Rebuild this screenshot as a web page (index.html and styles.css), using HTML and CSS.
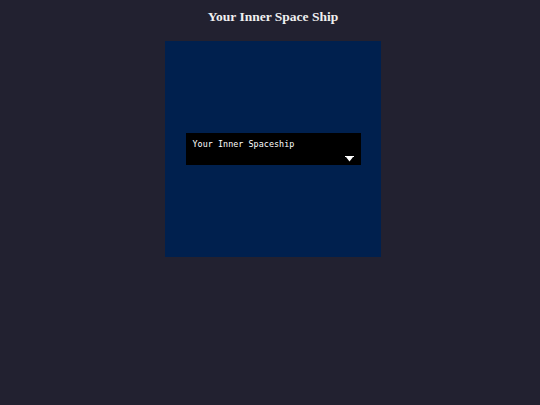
FILE: index.html
```html
<!DOCTYPE html>
<html>
<head>
<meta charset="utf-8">
<link rel="stylesheet" href="styles.css">
</head>
<body>
<div class="page">
  <h1 class="title">Your Inner Space Ship</h1>
  <div class="canvas">
    <div class="dialog">
      <div class="dialog-text">Your Inner Spaceship</div>
      <svg class="arrow" width="9" height="6" viewBox="0 0 9 6"><path d="M0 0H9V1H8L4.5 5.5L1 1H0Z" fill="#fff"/></svg>
    </div>
  </div>
</div>
</body>
</html>
```
FILE: styles.css
```css
html, body {
  margin: 0;
  padding: 0;
  background: #222130;
  height: 100%;
}
.page {
  display: flex;
  flex-direction: column;
  align-items: center;
  padding-left: 6px;
}
.title {
  margin: 8px 0 16px;
  font-family: "Liberation Serif", serif;
  font-weight: bold;
  font-size: 13.5px;
  line-height: 17px;
  color: #f0f0f0;
}
.canvas {
  width: 216px;
  height: 216px;
  background: #00204e;
  display: flex;
  align-items: center;
  justify-content: center;
}
.dialog {
  width: 175px;
  height: 32px;
  background: #000;
  position: relative;
  box-sizing: border-box;
  padding: 6px 7px;
}
.dialog-text {
  font-family: "DejaVu Sans Mono", monospace;
  font-size: 8.4px;
  letter-spacing: 0.05px;
  line-height: 10px;
  color: #fff;
}
.arrow {
  position: absolute;
  right: 7px;
  bottom: 3px;
}
```
